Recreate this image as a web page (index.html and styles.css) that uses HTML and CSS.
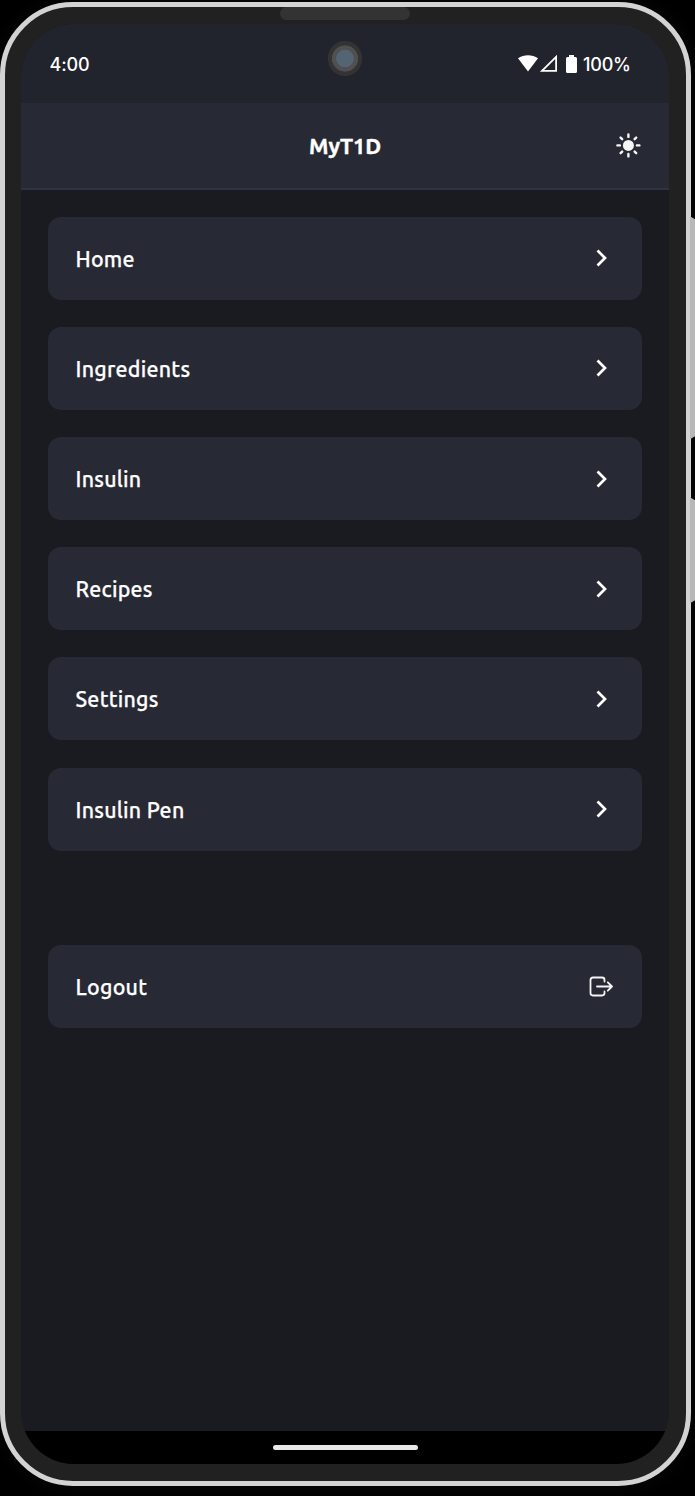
FILE: index.html
```html
<!DOCTYPE html>
<html lang="en">
<head>
<meta charset="utf-8">
<title>MyT1D</title>
<link rel="stylesheet" href="styles.css">
</head>
<body>
<svg class="defs" width="0" height="0"><symbol id="chevron" viewBox="0 0 24 24"><path d="M7.5 4.5 15 12 7.5 19.5" fill="none" stroke="#fff" stroke-width="2.7"/></symbol></svg>
<main class="device">
  <span class="key volume"></span><span class="key power"></span><span class="speaker"></span><span class="camera"></span>
  <div class="screen">
    <div class="status">
      <span class="time">4:00</span>
      <div class="indicators">
        <svg width="54" height="20" viewBox="0 0 54 20" fill="#fff"><path d="M0 3.7C5.8-.3 14.2-.3 20 3.7L10 17Z" transform="translate(0 .5)"/><path d="M24 16.8H38.1V2.8Z" fill="none" stroke="#fff" stroke-width="1.8"/></svg>
        <svg class="battery" width="11" height="19" viewBox="0 0 11 19" fill="#fff"><path d="M3 0H8V2H9.5Q11 2 11 3.5V16.5Q11 18 9.5 18H1.5Q0 18 0 16.5V3.5Q0 2 1.5 2H3Z"/></svg>
        <span class="percent">100%</span>
      </div>
    </div>
    <header class="header">
      <h1>MyT1D</h1>
      <svg class="sun" width="26" height="26" viewBox="-13.4 -13.4 26 26"><circle r="5.5" fill="#f5f5f5"/><g stroke="#f5f5f5" stroke-width="2.4" stroke-linecap="round"><path d="M0-11V-8.5M0 11V8.5M-11 0H-8.5M11 0H8.5M-7.8-7.8-6.2-6.2M7.8 7.8 6.2 6.2M-7.8 7.8-6.2 6.2M7.8-7.8 6.2-6.2"/></g></svg>
    </header>
    <nav class="menu">
      <a class="item home"><span>Home</span><svg class="arrow"><use href="#chevron"/></svg></a>
      <a class="item ingredients"><span>Ingredients</span><svg class="arrow"><use href="#chevron"/></svg></a>
      <a class="item insulin"><span>Insulin</span><svg class="arrow"><use href="#chevron"/></svg></a>
      <a class="item recipes"><span>Recipes</span><svg class="arrow"><use href="#chevron"/></svg></a>
      <a class="item settings"><span>Settings</span><svg class="arrow"><use href="#chevron"/></svg></a>
      <a class="item pen"><span>Insulin Pen</span><svg class="arrow"><use href="#chevron"/></svg></a>
      <a class="item logout"><span>Logout</span><svg class="exit" width="26" height="24" viewBox="-1 .5 26 24" fill="none" stroke="#f5f5f5" stroke-width="1.8" stroke-linecap="round" stroke-linejoin="round"><path d="M15.5 7V5.4Q15.5 3 13 3H4Q1.5 3 1.5 5.4V18.6Q1.5 21 4 21H13Q15.5 21 15.5 18.6V17M8 12H23M18.8 7.8 23 12 18.8 16.2"/></svg></a>
    </nav>
    <footer class="navbar"><span></span></footer>
  </div>
</main>
</body>
</html>
```
FILE: styles.css
```css
* { box-sizing: border-box; }
body { margin: 0; height: 1496px; overflow: hidden; background: #000; color: #fff; font-family: Ubuntu, "Noto Sans", sans-serif; }
.defs { position: absolute; }
.device { position: relative; width: 691px; height: 1483.5px; margin: 2.3px 0 0 -.4px; padding: 16.7px 16.7px; border: 5px solid #d3d3d3; border-radius: 73px; background: #212121; box-shadow: 0 0 20px #0a0a0a; }
.screen { display: flex; flex-direction: column; width: 647.7px; height: 1440px; border-radius: 53px; overflow: hidden; background: #1a1b20; }
.key { position: absolute; left: 685.4px; width: 10px; background: #b8b8b8; }
.volume { top: 209px; height: 223px; clip-path: polygon(0 0, 100% 6px, 100% 217px, 0 100%); }
.power { top: 490px; height: 106px; clip-path: polygon(0 0, 100% 6px, 100% 100px, 0 100%); }
.speaker { position: absolute; top: -.5px; left: 275.4px; width: 130px; height: 13px; border-radius: 7px; background: #333; }
.camera { position: absolute; z-index: 2; top: 34px; left: 323.3px; width: 34.5px; height: 34.5px; border-radius: 50%; background: radial-gradient(circle, #536575 0 8.5px, #505050 9px 12.8px, #333 13.3px); }
.status { display: flex; align-items: center; justify-content: space-between; flex: 0 0 79px; padding: 2px 38.3px 0 28.2px; background: #22242d; line-height: 24px; }
.time { padding-top: 1px; font-family: Inter, sans-serif; font-size: 18px; font-weight: 500; letter-spacing: -.1px; }
.indicators { display: flex; align-items: center; }
.battery { margin-right: 6px; margin-left: -6px; }
.percent { padding-top: 1px; font-family: Inter, sans-serif; font-size: 18px; font-weight: 500; letter-spacing: -.25px; }
.header { display: grid; grid-template-columns: 1fr auto 1fr; align-items: center; flex: 0 0 87px; padding: 0 28px; background: #272934; border-bottom: 2px solid #303243; }
.header h1 { grid-column: 2; margin: 0; padding-top: 1px; font-size: 21.8px; line-height: 30px; font-weight: 700; -webkit-text-stroke: .4px #fff; }
.sun { justify-self: end; }
.menu { display: flex; flex: 1; flex-direction: column; gap: 27.2px; padding: 26.7px 27px 0; }
.item { display: flex; align-items: center; justify-content: space-between; flex: 0 0 83px; padding: 0 28px 0 27.2px; border-radius: 13px; background: #272934; font-size: 21.4px; line-height: 28px; font-weight: 500; letter-spacing: .26px; -webkit-text-stroke: .25px #fff; }
.item span { padding-top: 1px; }
.arrow { width: 24px; height: 24px; }
.logout { margin-top: 67.3px; }
.navbar { display: flex; align-items: center; justify-content: center; flex: 0 0 32.5px; background: #000; }
.navbar span { width: 145px; height: 5.5px; border-radius: 3px; background: #e8e8e8; }
```
